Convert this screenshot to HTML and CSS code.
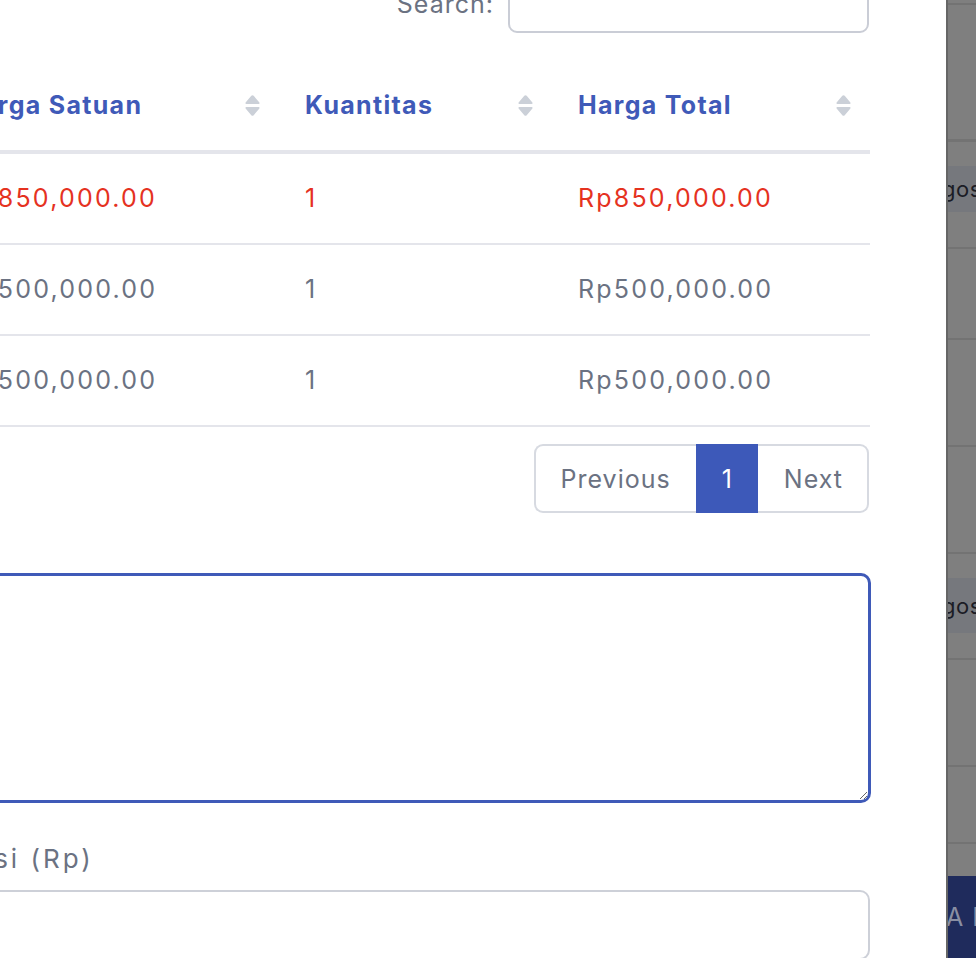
FILE: index.html
```html
<!DOCTYPE html>
<html lang="id">
<head>
<meta charset="utf-8">
<title>Detail Transaksi</title>
<link rel="stylesheet" href="styles.css">
</head>
<body>
<div class="stage">
  <div class="modal">
    <div class="modal-body">
      <div class="search-row">
        <label class="search-label" for="q">Search:</label>
        <input id="q" class="search-input" type="search">
      </div>

      <div class="table-wrap">
        <table class="data-table">
          <colgroup>
            <col class="col-a">
            <col class="col-b">
            <col class="col-c">
          </colgroup>
          <thead>
            <tr>
              <th><div class="th-inner"><span>Harga Satuan</span><svg class="sort" width="15" height="21" viewBox="0 0 15 21"><path d="M6.3 0.8 Q7.5 -0.4 8.7 0.8 L14.4 7.6 Q15 9 13.6 9 H1.4 Q0 9 0.6 7.6 Z M1.4 12 H13.6 Q15 12 14.4 13.4 L8.7 20.2 Q7.5 21.4 6.3 20.2 L0.6 13.4 Q0 12 1.4 12 Z"/></svg></div></th>
              <th><div class="th-inner"><span>Kuantitas</span><svg class="sort" width="15" height="21" viewBox="0 0 15 21"><path d="M6.3 0.8 Q7.5 -0.4 8.7 0.8 L14.4 7.6 Q15 9 13.6 9 H1.4 Q0 9 0.6 7.6 Z M1.4 12 H13.6 Q15 12 14.4 13.4 L8.7 20.2 Q7.5 21.4 6.3 20.2 L0.6 13.4 Q0 12 1.4 12 Z"/></svg></div></th>
              <th><div class="th-inner"><span>Harga Total</span><svg class="sort" width="15" height="21" viewBox="0 0 15 21"><path d="M6.3 0.8 Q7.5 -0.4 8.7 0.8 L14.4 7.6 Q15 9 13.6 9 H1.4 Q0 9 0.6 7.6 Z M1.4 12 H13.6 Q15 12 14.4 13.4 L8.7 20.2 Q7.5 21.4 6.3 20.2 L0.6 13.4 Q0 12 1.4 12 Z"/></svg></div></th>
            </tr>
          </thead>
          <tbody>
            <tr class="row-alert">
              <td>Rp850,000.00</td>
              <td>1</td>
              <td>Rp850,000.00</td>
            </tr>
            <tr>
              <td>Rp500,000.00</td>
              <td>1</td>
              <td>Rp500,000.00</td>
            </tr>
            <tr>
              <td>Rp500,000.00</td>
              <td>1</td>
              <td>Rp500,000.00</td>
            </tr>
          </tbody>
        </table>
      </div>

      <div class="pager-row">
        <div class="pager">
          <span class="pg pg-first">Previous</span>
          <span class="pg pg-active">1</span>
          <span class="pg pg-last">Next</span>
        </div>
      </div>

      <textarea class="note"></textarea>

      <label class="field-label">Biaya Administrasi (Rp)</label>
      <input class="amount-input" type="text">
    </div>
  </div>

  <div class="backdrop">
    <div class="seg s1"></div>
    <div class="seg s2"></div>
    <div class="seg s3"></div>
    <div class="band band-1">gos</div>
    <div class="seg s4"></div>
    <div class="seg s5"></div>
    <div class="seg s6"></div>
    <div class="seg s7"></div>
    <div class="seg s8"></div>
    <div class="band band-2">gos</div>
    <div class="seg s9"></div>
    <div class="seg s10"></div>
    <div class="seg s11"></div>
    <div class="seg s12"></div>
    <div class="navy">A I</div>
  </div>
</div>
</body>
</html>
```

FILE: styles.css
```css
* {
  box-sizing: border-box;
}

html,
body {
  margin: 0;
  height: 100%;
  overflow: hidden;
  background: #ffffff;
}

body {
  font-family: Inter, "Noto Sans", sans-serif;
  font-size: 25px;
  letter-spacing: 1px;
  color: #6b7282;
}

.stage {
  display: flex;
  height: 958px;
}

/* ---------- modal ---------- */
.modal {
  flex: none;
  width: 946px;
  background: #ffffff;
  overflow: hidden;
}

.modal-body {
  margin-top: -22px;
  margin-left: -259px;
  padding-right: 76px;
}

.search-row {
  display: flex;
  justify-content: flex-end;
  align-items: center;
  gap: 14px;
  height: 55px;
  padding-right: 1px;
}

.search-label {
  color: #6b7282;
  line-height: 30px;
  margin-top: -4px;
}

.search-input {
  width: 361px;
  height: 55px;
  border: 2px solid #cacdd6;
  border-radius: 9px;
  background: #ffffff;
}

/* ---------- table ---------- */
.table-wrap {
  margin-top: 27px;
  margin-left: 195px;
}

.data-table {
  width: 934px;
  table-layout: fixed;
  border-collapse: separate;
  border-spacing: 0;
}

.col-a { width: 343px; }
.col-b { width: 273px; }
.col-c { width: 318px; }

.data-table th {
  padding: 30px 19px 30px 26px;
  line-height: 30px;
  border-bottom: 4px solid #e4e5eb;
  text-align: left;
  font-weight: 700;
  letter-spacing: 1.3px;
  color: #3f5ab8;
  white-space: nowrap;
}

.th-inner {
  display: flex;
  justify-content: space-between;
  align-items: center;
}

.sort {
  flex: none;
  fill: #cbd0d8;
}

.data-table td {
  padding: 29px 19px 29px 26px;
  line-height: 31px;
  border-bottom: 2px solid #e4e5eb;
  white-space: nowrap;
  letter-spacing: 2.2px;
  color: #6b7282;
}

.row-alert td {
  color: #e5321f;
}

/* ---------- pagination ---------- */
.pager-row {
  display: flex;
  justify-content: flex-end;
  margin-top: 17px;
  padding-right: 1px;
}

.pager {
  display: flex;
  height: 69px;
}

.pg {
  display: flex;
  align-items: center;
  padding: 0 25px;
  color: #6b7282;
  border-top: 2px solid #d7dae1;
  border-bottom: 2px solid #d7dae1;
}

.pg-first {
  border-left: 2px solid #d7dae1;
  border-radius: 9px 0 0 9px;
}

.pg-last {
  border-right: 2px solid #d7dae1;
  border-radius: 0 9px 9px 0;
  padding: 0 24px 0 26px;
}

.pg-active {
  background: #3d59b9;
  color: #ffffff;
  border-color: #3d59b9;
  padding: 0 25px 0 26px;
}

/* ---------- form ---------- */
.note {
  display: block;
  width: calc(100% + 1px);
  height: 230px;
  margin-top: 60px;
  border: 3px solid #3f5ab8;
  border-radius: 10px;
  outline: none;
  resize: vertical;
  background: #ffffff;
}

.field-label {
  display: block;
  margin-top: 38px;
  font-size: 26px;
  line-height: 36px;
  letter-spacing: 3px;
  color: #6b7282;
  white-space: nowrap;
}

.amount-input {
  display: block;
  width: 100%;
  height: 70px;
  margin-top: 13px;
  border: 2px solid #cdd0d8;
  border-radius: 10px;
  background: #ffffff;
}

/* ---------- backdrop (page behind modal) ---------- */
.backdrop {
  flex: 1;
  display: flex;
  flex-direction: column;
  background: #7f7f7f;
  border-left: 2px solid #666666;
  overflow: hidden;
}

.seg {
  flex: none;
  border-bottom: 2px solid #737373;
}

.s1 { height: 5px; }
.s2 { height: 137px; border-bottom-width: 3px; }
.s3 { height: 24px; border-bottom: 0; }
.s4 { height: 37px; }
.s5 { height: 91px; }
.s6 { height: 107px; }
.s7 { height: 107px; }
.s8 { height: 24px; border-bottom: 0; }
.s9 { height: 27px; }
.s10 { height: 107px; }
.s11 { height: 77px; }
.s12 { height: 32px; border-bottom: 0; }

.band {
  flex: none;
  display: flex;
  align-items: center;
  margin-left: -6px;
  background: #76787d;
  color: #1b1c25;
  font-size: 22px;
  letter-spacing: 0.5px;
  white-space: nowrap;
}

.band-1 { height: 46px; }
.band-2 { height: 55px; }

.navy {
  flex: 1;
  display: flex;
  align-items: center;
  margin-left: -2px;
  background: #1f2b5c;
  color: #8a8fa3;
  font-size: 25px;
  letter-spacing: 1px;
  white-space: nowrap;
}
```
